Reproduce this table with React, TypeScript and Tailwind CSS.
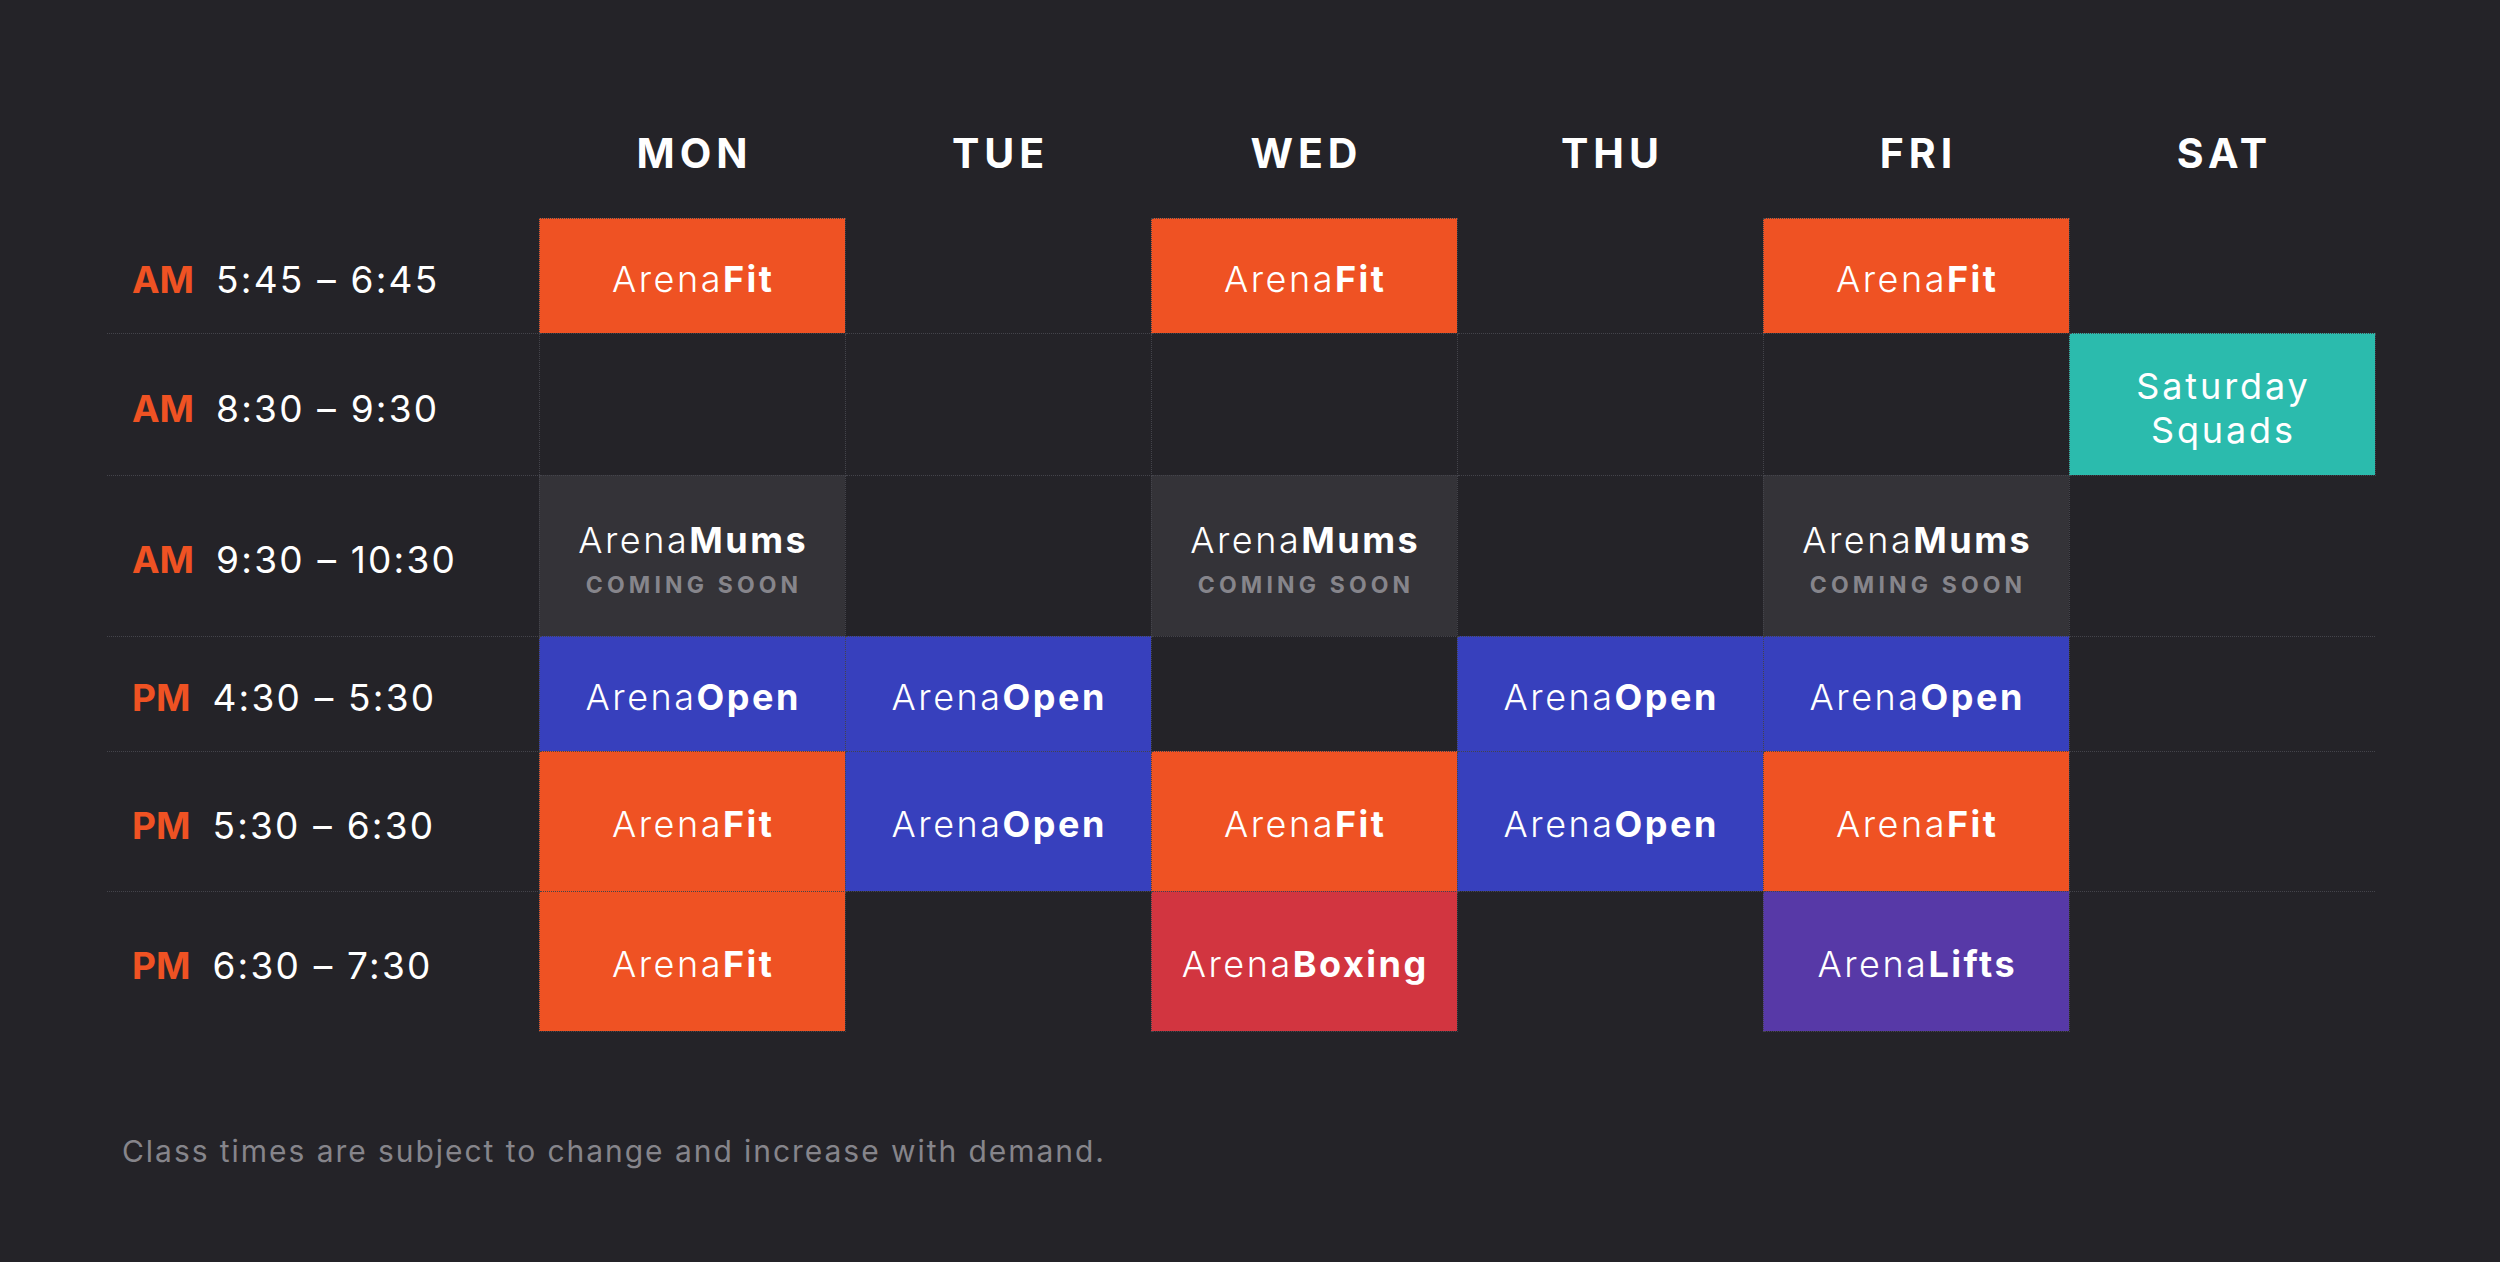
type ClassKind = "fit" | "open" | "mums" | "boxing" | "lifts" | "squads";

type Row = {
  period: "AM" | "PM";
  time: string;
  height: string;
  cells: (ClassKind | null)[];
};

const days = ["MON", "TUE", "WED", "THU", "FRI", "SAT"];

const rows: Row[] = [
  { period: "AM", time: "5:45 – 6:45", height: "h-[115px]", cells: ["fit", null, "fit", null, "fit", null] },
  { period: "AM", time: "8:30 – 9:30", height: "h-[142px]", cells: [null, null, null, null, null, "squads"] },
  { period: "AM", time: "9:30 – 10:30", height: "h-[161px]", cells: ["mums", null, "mums", null, "mums", null] },
  { period: "PM", time: "4:30 – 5:30", height: "h-[115px]", cells: ["open", "open", null, "open", "open", null] },
  { period: "PM", time: "5:30 – 6:30", height: "h-[140px]", cells: ["fit", "open", "fit", "open", "fit", null] },
  { period: "PM", time: "6:30 – 7:30", height: "h-[140px]", cells: ["fit", null, "boxing", null, "lifts", null] },
];

const classColors: Record<ClassKind, string> = {
  fit: "bg-[#ef5223]",
  open: "bg-[#3740bd]",
  mums: "bg-[#343338]",
  boxing: "bg-[#d23540]",
  lifts: "bg-[#5739a7]",
  squads: "bg-[#2bbbad]",
};

const classNames: Record<Exclude<ClassKind, "squads">, string> = {
  fit: "Fit",
  open: "Open",
  mums: "Mums",
  boxing: "Boxing",
  lifts: "Lifts",
};

function ClassLabel({ kind }: { kind: ClassKind }) {
  if (kind === "squads") {
    return (
      <div className="pt-[7px] pl-[0.08em] text-[36px] leading-[44px] font-normal tracking-[0.08em] text-white">
        Saturday
        <br />
        Squads
      </div>
    );
  }

  return (
    <div className="flex flex-col items-center pt-[6px]">
      <div className="pl-[0.07em] text-[36px] leading-[44px] tracking-[0.07em] text-white">
        <span className="font-light">Arena</span>
        <span className="font-bold">{classNames[kind]}</span>
      </div>
      {kind === "mums" && (
        <div className="mt-[8px] pl-[0.18em] text-[23px] leading-[30px] font-bold tracking-[0.18em] text-[#86858b]">
          COMING SOON
        </div>
      )}
    </div>
  );
}

export default function App() {
  return (
    <div className="min-h-screen bg-[#242328] px-[107px] pt-[118px] font-['Inter',sans-serif] text-white">
      <table className="border-collapse">
        <thead>
          <tr>
            <th className="h-[100px] w-[432px] p-0" />
            {days.map((day) => (
              <th
                key={day}
                className="h-[100px] w-[306px] p-0 pl-[0.12em] text-center align-top text-[41px] leading-[70px] font-bold tracking-[0.12em]"
              >
                {day}
              </th>
            ))}
          </tr>
        </thead>
        <tbody>
          {rows.map((row, i) => {
            const last = i === rows.length - 1;
            return (
              <tr key={row.time}>
                <td
                  className={`${row.height} p-0 pt-[9px] pl-[25px] align-middle ${
                    last ? "" : "border-b border-dotted border-[#44444b]"
                  }`}
                >
                  <span className="text-[37px] font-bold text-[#ef5223]">
                    {row.period}
                  </span>
                  <span className="ml-[22px] text-[37px] font-normal tracking-[0.06em]">
                    {row.time}
                  </span>
                </td>
                {row.cells.map((cell, d) => {
                  const isSat = d === 5;
                  const edge = isSat ? "" : "border-x border-dotted border-[#44444b]";
                  const bottom = last ? "" : "border-b border-dotted border-[#44444b]";
                  if (!cell) {
                    return <td key={d} className={`${row.height} p-0 ${edge} ${bottom}`} />;
                  }
                  return (
                    <td
                      key={d}
                      className={`${row.height} p-0 text-center align-middle ${classColors[cell]} border border-dotted border-[#44444b]`}
                    >
                      <ClassLabel kind={cell} />
                    </td>
                  );
                })}
              </tr>
            );
          })}
        </tbody>
      </table>

      <p className="mt-[99px] ml-[15px] text-[30px] leading-[40px] tracking-[0.065em] text-[#86858b]">
        Class times are subject to change and increase with demand.
      </p>
    </div>
  );
}
